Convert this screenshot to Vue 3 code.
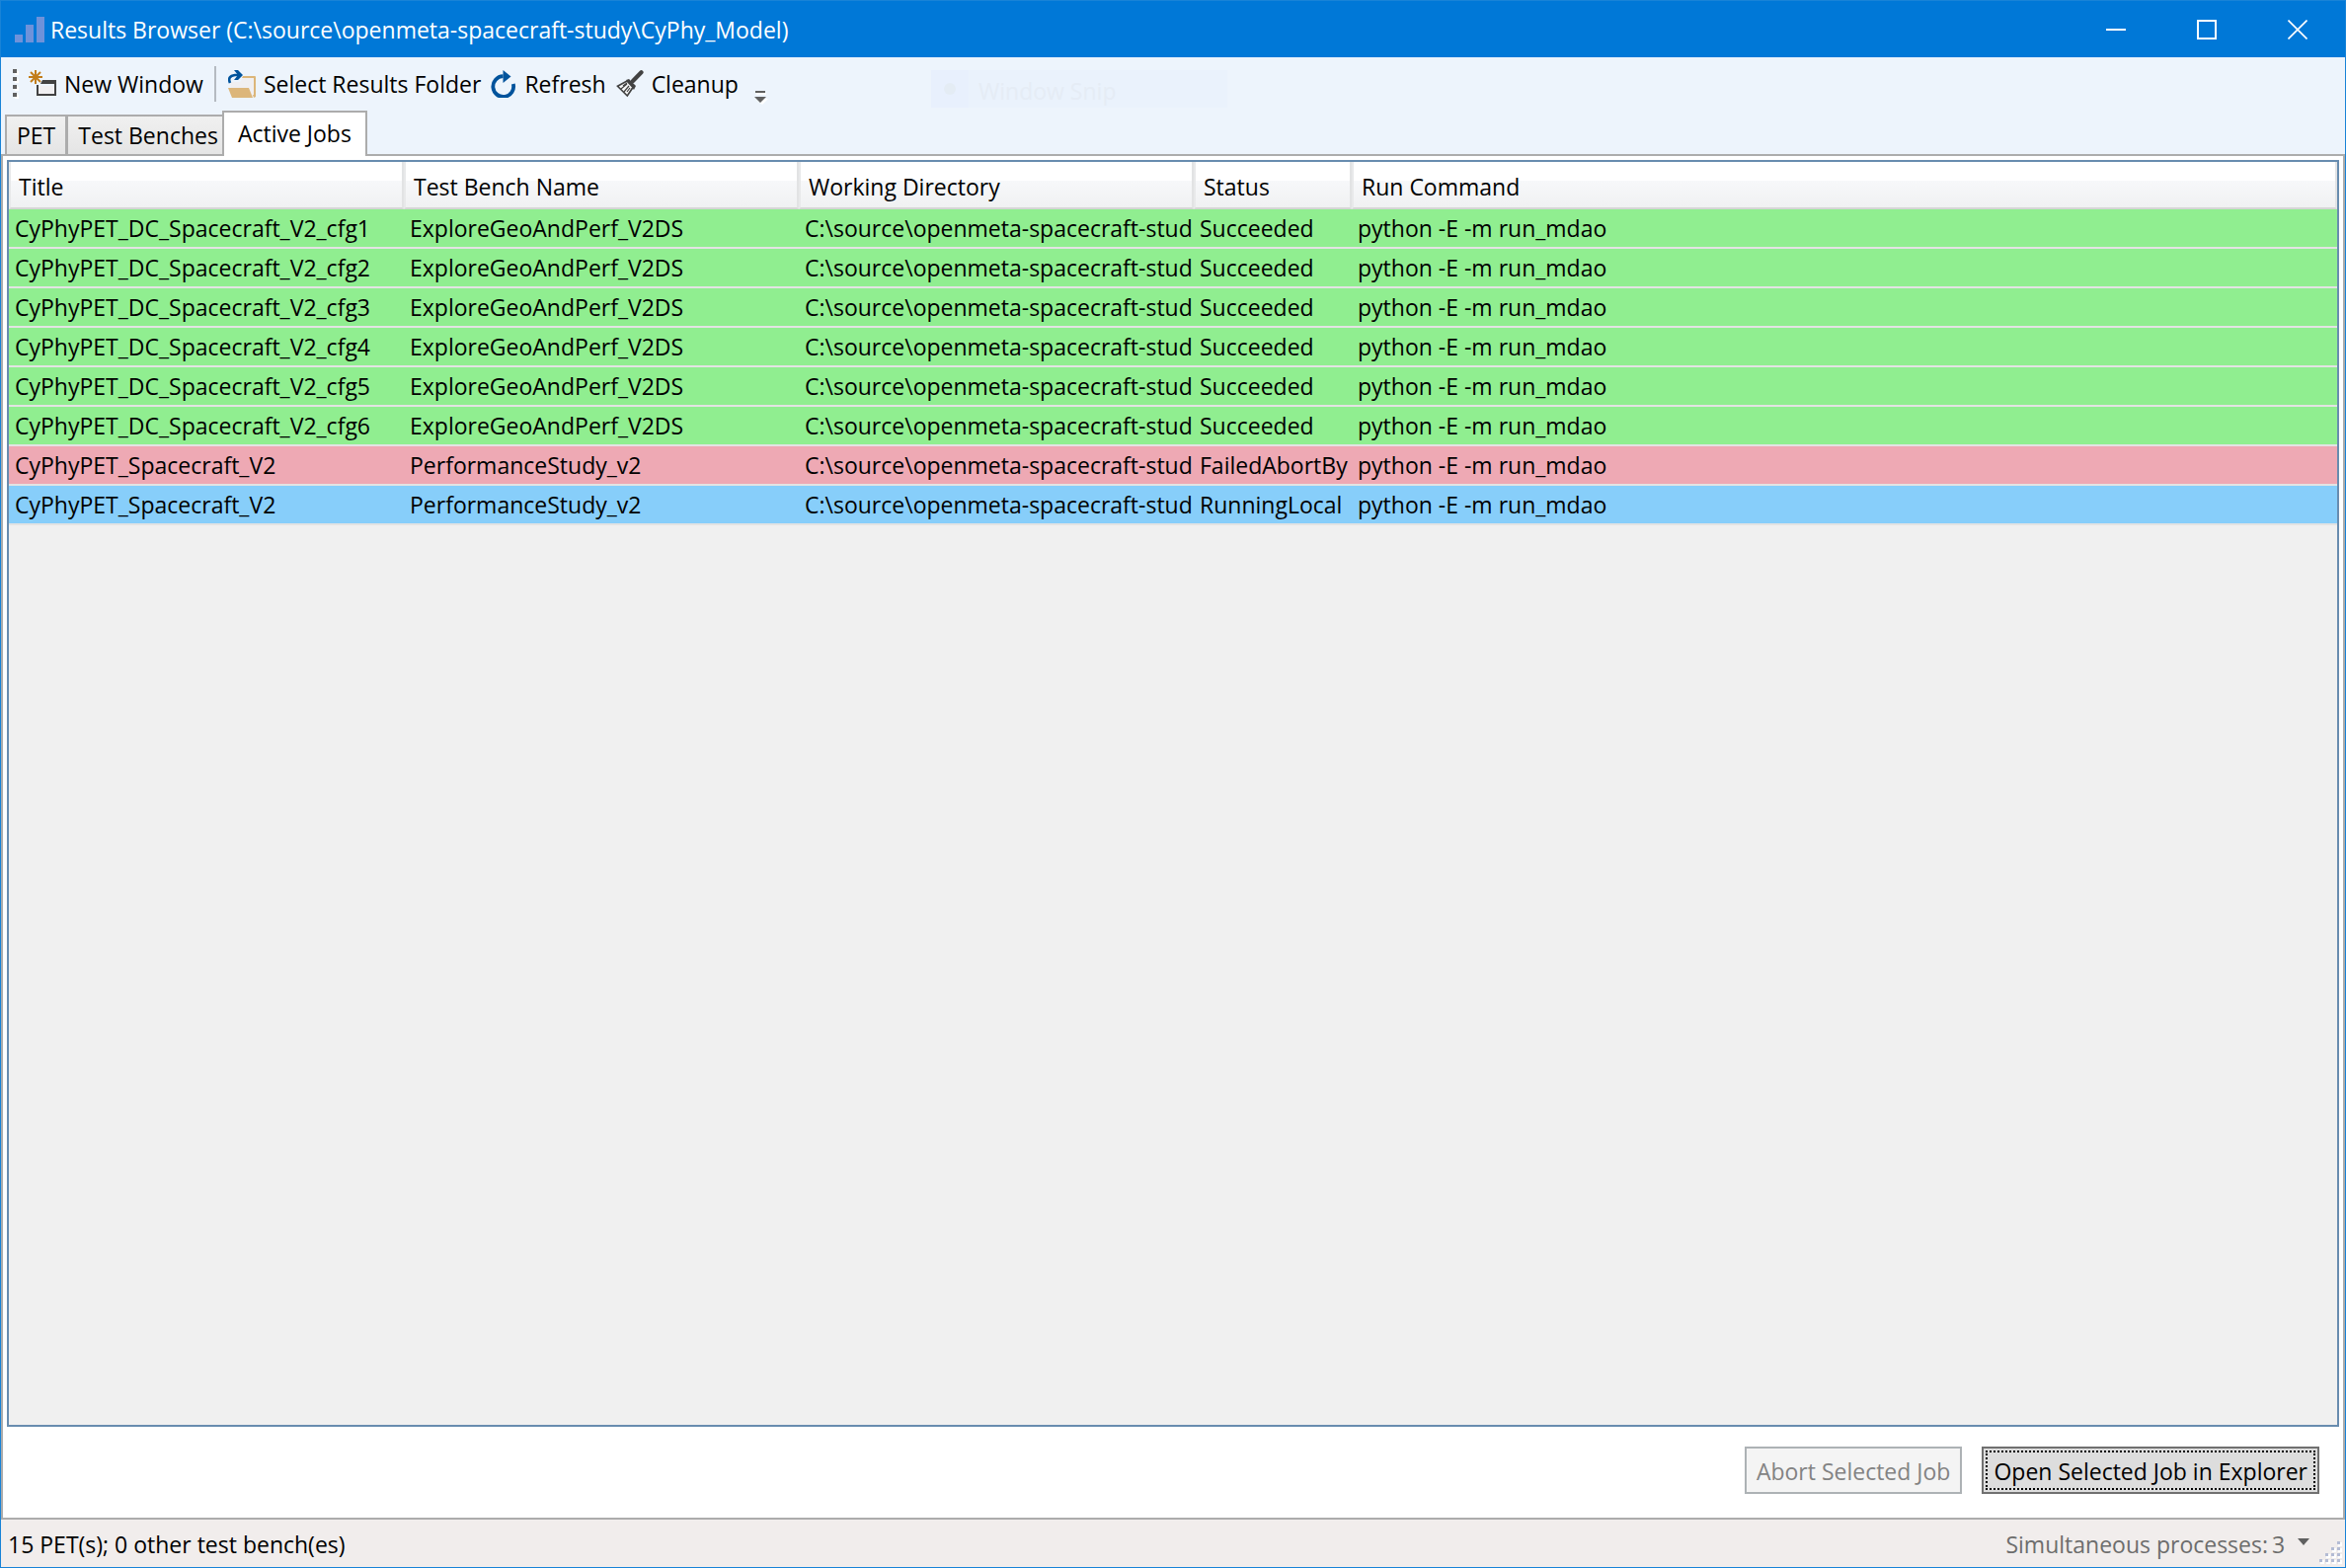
<script setup>
import { ref } from 'vue'

const tabs = ['PET', 'Test Benches', 'Active Jobs']
const activeTab = ref('Active Jobs')
const processes = ref(3)

const columns = [
  { name: 'Title', cls: 'col-wide' },
  { name: 'Test Bench Name', cls: 'col-wide' },
  { name: 'Working Directory', cls: 'col-wide' },
  { name: 'Status', cls: 'col-status' },
  { name: 'Run Command', cls: 'col-rest' },
]

const directory = 'C:\\source\\openmeta-spacecraft-stud'
const command = 'python -E -m run_mdao'

const jobs = [
  ...[1, 2, 3, 4, 5, 6].map((n) => ({
    title: `CyPhyPET_DC_Spacecraft_V2_cfg${n}`,
    bench: 'ExploreGeoAndPerf_V2DS',
    status: 'Succeeded',
    state: 'succeeded',
  })),
  { title: 'CyPhyPET_Spacecraft_V2', bench: 'PerformanceStudy_v2', status: 'FailedAbortBy', state: 'failed' },
  { title: 'CyPhyPET_Spacecraft_V2', bench: 'PerformanceStudy_v2', status: 'RunningLocal', state: 'running' },
]
</script>

<template>
  <div class="window">
    <header class="titlebar">
      <svg class="app-icon" width="30" height="26" viewBox="0 0 30 26" aria-hidden="true">
        <path d="M0 18h8v8H0zM11 8h8v18h-8zM22 0h8v26h-8z" fill="#6e92da" />
      </svg>
      <h1 class="caption">Results Browser (C:\source\openmeta-spacecraft-study\CyPhy_Model)</h1>
      <div class="window-controls">
        <button type="button" aria-label="Minimize">
          <svg width="20" height="20" viewBox="0 0 20 20"><path d="M0 9h20v2H0z" fill="#fff" /></svg>
        </button>
        <button type="button" aria-label="Maximize">
          <svg width="20" height="20" viewBox="0 0 20 20"><path d="M1 1h18v18H1z" fill="none" stroke="#fff" stroke-width="2" /></svg>
        </button>
        <button type="button" aria-label="Close">
          <svg width="20" height="20" viewBox="0 0 20 20"><path d="M.5.5l19 19M19.5.5l-19 19" fill="none" stroke="#fff" stroke-width="1.6" /></svg>
        </button>
      </div>
    </header>

    <div class="toolbar" role="toolbar" aria-label="Main">
      <svg class="grip" width="6" height="30" viewBox="0 0 6 30" aria-hidden="true">
        <path d="M2 2h4v4H2zM2 10h4v4H2zM2 18h4v4H2zM2 26h4v4H2z" fill="#fff" />
        <path d="M0 0h4v4H0zM0 8h4v4H0zM0 16h4v4H0zM0 24h4v4H0z" fill="#606060" />
      </svg>
      <button type="button" class="tool">
        <svg width="28" height="28" viewBox="0 0 28 28" aria-hidden="true">
          <path d="M9 16h18v10H9z" fill="#f0eff1" />
          <path d="M14 10h14v16H8V15h2v9h16V14H12z" fill="#424242" />
          <path d="M7 0v14M0 7h14M2 2l10 10M12 2L2 12" stroke="#c27d1a" stroke-width="2" fill="none" />
        </svg>
        New Window
      </button>
      <span class="divider"></span>
      <button type="button" class="tool">
        <svg width="28" height="28" viewBox="0 0 28 28" aria-hidden="true">
          <path d="M2 12h10l4-5h10v19H4z" fill="#f0eff1" />
          <path d="M15 6h12q1 0 1 1v20l-2 1-1-3h1V8H14z" fill="#dcb67a" />
          <path d="M0 18h21l4 10H4z" fill="#dcb67a" />
          <path d="M2 13Q-1 6 7 5h5" stroke="#00539c" stroke-width="2.6" fill="none" />
          <path d="M6 0h4l5 5-5 5H6l4-5z" fill="#00539c" />
        </svg>
        Select Results Folder
      </button>
      <button type="button" class="tool">
        <svg width="26" height="28" viewBox="0 0 26 28" aria-hidden="true">
          <path d="M22.8 14A10.4 10.4 0 1 1 12.5 6.2" stroke="#00539c" stroke-width="3.8" fill="none" />
          <path d="M12.5 0l8 6.6-8 6.4z" fill="#00539c" />
        </svg>
        Refresh
      </button>
      <button type="button" class="tool">
        <svg width="28" height="28" viewBox="0 0 28 28" aria-hidden="true">
          <path d="M25.5 2.3L17 11" stroke="#424242" stroke-width="4.2" stroke-linecap="round" />
          <path d="M10 10l3-1 7 7-2 4z" fill="#424242" />
          <path d="M1.5 16.3L11 11l6 6.500L11.300 26z" fill="#f6f6f6" stroke="#424242" stroke-width="1.7" />
          <path d="M5 19l6-5M8 22l5-6M7 16l4-3M11 22l3-4" stroke="#424242" stroke-width="1.2" />
        </svg>
        Cleanup
      </button>
      <button type="button" class="overflow" aria-label="Toolbar options">
        <svg width="14" height="14" viewBox="0 0 14 14" aria-hidden="true">
          <path d="M2 2h10v2H2zM2 8h12l-6 6z" fill="#fff" />
          <path d="M1 0h10v2H1zM0 6h12l-6 6z" fill="#606060" />
        </svg>
      </button>
      <div class="snip" aria-hidden="true">
        <span class="snip-mark"></span>
        <span class="snip-text">Window Snip</span>
      </div>
    </div>

    <div class="tabs" role="tablist">
      <button
        v-for="tab in tabs"
        :key="tab"
        type="button"
        role="tab"
        class="tab"
        :class="{ active: tab === activeTab }"
        :aria-selected="tab === activeTab"
        @click="activeTab = tab"
      >{{ tab }}</button>
    </div>

    <main class="pane">
      <div class="list">
        <table class="jobs">
          <thead>
            <tr>
              <th v-for="c in columns" :key="c.name" scope="col" :class="c.cls">{{ c.name }}</th>
            </tr>
          </thead>
          <tbody>
            <tr v-for="(job, i) in jobs" :key="i" :class="job.state">
              <td>{{ job.title }}</td>
              <td>{{ job.bench }}</td>
              <td>{{ directory }}</td>
              <td>{{ job.status }}</td>
              <td>{{ command }}</td>
            </tr>
          </tbody>
        </table>
      </div>
      <div class="actions">
        <button type="button" class="action" disabled>Abort Selected Job</button>
        <button type="button" class="action focused">Open Selected Job in Explorer</button>
      </div>
    </main>

    <footer class="statusbar">
      <span>15 PET(s); 0 other test bench(es)</span>
      <div class="processes">
        <label for="processes">Simultaneous processes:</label>
        <select id="processes" v-model="processes">
          <option v-for="n in 8" :key="n" :value="n">{{ n }}</option>
        </select>
        <svg class="caret" width="12" height="8" viewBox="0 0 12 8" aria-hidden="true"><path d="M0 0h12L6 7z" fill="#606060" /></svg>
      </div>
      <svg class="resize" width="24" height="24" viewBox="0 0 24 24" aria-hidden="true">
        <g fill="#fff">
          <path d="M20 2h4v4h-4zM14 8h4v4h-4zM20 8h4v4h-4zM8 14h4v4H8zM14 14h4v4h-4zM20 14h4v4h-4zM2 20h4v4H2zM8 20h4v4H8zM14 20h4v4h-4zM20 20h4v4h-4z" />
        </g>
        <g fill="#b4bcd4">
          <path d="M19 1h3v3h-3zM13 7h3v3h-3zM19 7h3v3h-3zM7 13h3v3H7zM13 13h3v3h-3zM19 13h3v3h-3zM1 19h3v3H1zM7 19h3v3H7zM13 19h3v3h-3zM19 19h3v3h-3z" />
        </g>
      </svg>
    </footer>
  </div>
</template>

<style>
body {
  margin: 0;
}
</style>

<style scoped>
.window {
  box-sizing: border-box;
  display: flex;
  flex-direction: column;
  min-height: 100vh;
  border: 1px solid #1883d7;
  background: #edf4fc;
  color: #000;
  font-family: "Open Sans", "Noto Sans", sans-serif;
  font-size: 23px;
  line-height: 32px;
}

button,
select {
  margin: 0;
  padding: 0;
  border: 0;
  border-radius: 0;
  background: none;
  color: inherit;
  font: inherit;
}

svg {
  display: block;
  flex: none;
}

.titlebar {
  display: flex;
  align-items: center;
  height: 57px;
  padding: 0 2px 0 14px;
  background: #0078d7;
  color: #fff;
}

.caption {
  flex: 1;
  margin: 0 0 0 6px;
  font-size: 23px;
  font-weight: 400;
  white-space: nowrap;
}

.window-controls {
  display: flex;
  align-self: stretch;
}

.window-controls button {
  display: flex;
  align-items: center;
  justify-content: center;
  width: 92px;
}

.toolbar {
  position: relative;
  display: flex;
  align-items: center;
  height: 54px;
  padding-left: 12px;
}

.grip {
  margin-right: 5px;
}

.tool {
  display: flex;
  align-items: center;
  gap: 8px;
  padding: 0 5px;
  white-space: nowrap;
}

.divider {
  width: 2px;
  height: 36px;
  margin: 0 7px 0 6px;
  background: #b5bac1;
}

.overflow {
  align-self: flex-end;
  margin: 0 0 6px 11px;
}

.snip {
  position: absolute;
  top: 13px;
  left: 942px;
  display: flex;
  align-items: center;
  width: 300px;
  height: 38px;
  background: #eaf2fc;
  color: #e5ecf5;
}

.snip-mark {
  display: flex;
  align-items: center;
  justify-content: center;
  width: 38px;
  height: 38px;
  margin-right: 10px;
  background: #e8f0fd;
}

.snip-mark::before {
  content: "";
  width: 12px;
  height: 12px;
  border-radius: 50%;
  background: #e4ecf4;
}

.snip-text {
  padding-top: 3px;
}

.tabs {
  display: flex;
  align-items: flex-end;
  height: 44px;
  padding-left: 4px;
}

.tab {
  box-sizing: border-box;
  height: 40px;
  padding: 0 10px;
  border: 2px solid #acacac;
  border-bottom: 0;
  background: linear-gradient(#f0f0f0, #e5e5e5);
  white-space: nowrap;
}

.tab + .tab {
  margin-left: -1px;
}

.tab.active {
  position: relative;
  height: 46px;
  margin-bottom: -2px;
  padding: 0 14px 2px;
  background: #fff;
}

.tab + .tab.active {
  margin-left: -8px;
}

.pane {
  display: flex;
  flex: 1;
  flex-direction: column;
  padding: 4px;
  border: 2px solid #acacac;
  background: #fff;
}

.list {
  flex: 1;
  border: 2px solid #688caf;
  background: #f0f0f0;
}

.jobs {
  width: 100%;
  border-spacing: 0;
  table-layout: fixed;
}

.jobs th {
  box-sizing: border-box;
  height: 48px;
  padding: 4px 0 0 8px;
  border-right: 2px solid #e2e3e4;
  border-bottom: 2px solid #d5d5d5;
  border-left: 2px solid #e8e9ea;
  background: linear-gradient(#fff 0, #fff 41%, #f7f8fa 41%, #f0f1f2 100%);
  font-weight: 400;
  text-align: left;
}

.jobs td {
  box-sizing: border-box;
  height: 40px;
  padding: 0 0 0 6px;
  border-bottom: 2px solid #e3e3e3;
  overflow: hidden;
  white-space: nowrap;
}

.col-wide {
  width: 400px;
}

.col-status {
  width: 160px;
}

.succeeded {
  background: #90ee90;
}

.failed {
  background: #eea9b4;
}

.running {
  background: #87cefa;
}

.actions {
  display: flex;
  justify-content: flex-end;
  gap: 20px;
  padding: 20px 20px;
}

.action {
  box-sizing: border-box;
  height: 48px;
  padding: 2px 10px 0;
  border: 2px solid #707070;
  background: #ddd;
  white-space: nowrap;
}

.action:disabled {
  border-color: #adb2b5;
  background: #f4f4f4;
  color: #838383;
}

.action.focused {
  outline: 2px dotted #000;
  outline-offset: -6px;
}

.statusbar {
  display: flex;
  align-items: center;
  justify-content: space-between;
  height: 46px;
  padding: 2px 3px 0 7px;
  background: #f1edec;
}

.statusbar > span {
  flex: 1;
}

.processes {
  display: flex;
  align-items: center;
  gap: 4px;
  color: #6d6d6d;
}

.processes select {
  appearance: none;
}

.caret {
  margin: 0 9px 4px 8px;
}

.resize {
  align-self: flex-end;
  margin-bottom: 3px;
}
</style>
